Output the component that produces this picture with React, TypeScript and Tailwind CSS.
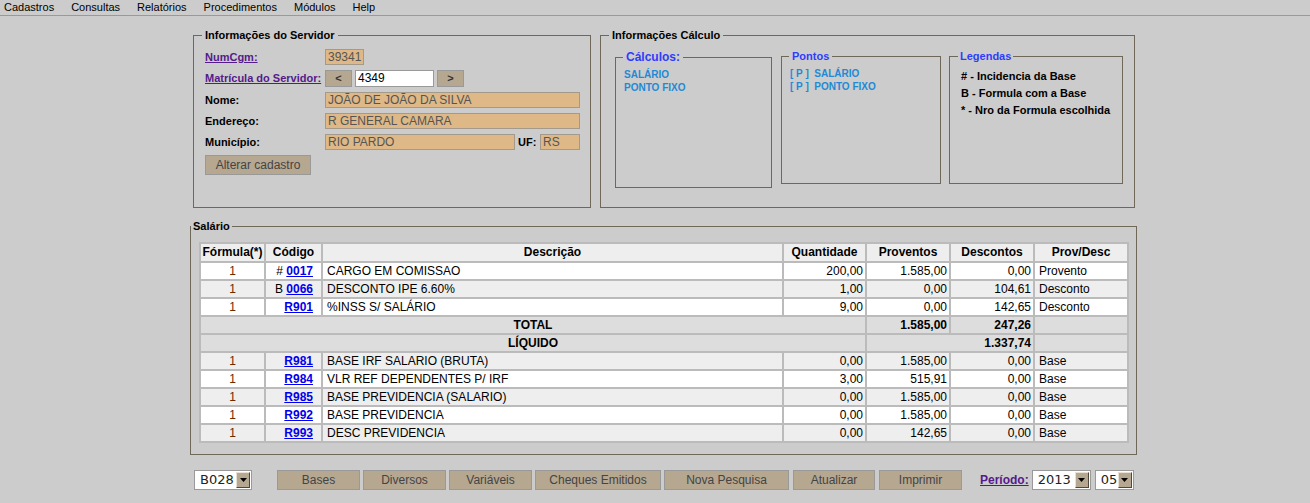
import React from "react";

type Row = {
  f: string;
  pre?: string;
  cod: string;
  desc: string;
  qtd: string;
  prov: string;
  desco: string;
  tipo: string;
  bg: string;
};

const topRows: Row[] = [
  { f: "1", pre: "# ", cod: "0017", desc: "CARGO EM COMISSAO", qtd: "200,00", prov: "1.585,00", desco: "0,00", tipo: "Provento", bg: "bg-white" },
  { f: "1", pre: "B ", cod: "0066", desc: "DESCONTO IPE 6.60%", qtd: "1,00", prov: "0,00", desco: "104,61", tipo: "Desconto", bg: "bg-[#eeeeee]" },
  { f: "1", cod: "R901", desc: "%INSS S/ SALÁRIO", qtd: "9,00", prov: "0,00", desco: "142,65", tipo: "Desconto", bg: "bg-white" },
];

const baseRows: Row[] = [
  { f: "1", cod: "R981", desc: "BASE IRF SALARIO (BRUTA)", qtd: "0,00", prov: "1.585,00", desco: "0,00", tipo: "Base", bg: "bg-[#eeeeee]" },
  { f: "1", cod: "R984", desc: "VLR REF DEPENDENTES P/ IRF", qtd: "3,00", prov: "515,91", desco: "0,00", tipo: "Base", bg: "bg-white" },
  { f: "1", cod: "R985", desc: "BASE PREVIDENCIA (SALARIO)", qtd: "0,00", prov: "1.585,00", desco: "0,00", tipo: "Base", bg: "bg-[#eeeeee]" },
  { f: "1", cod: "R992", desc: "BASE PREVIDENCIA", qtd: "0,00", prov: "1.585,00", desco: "0,00", tipo: "Base", bg: "bg-white" },
  { f: "1", cod: "R993", desc: "DESC PREVIDENCIA", qtd: "0,00", prov: "142,65", desco: "0,00", tipo: "Base", bg: "bg-[#eeeeee]" },
];

function Box({ className, children }: { className: string; children?: React.ReactNode }) {
  return (
    <div className={`h-[16px] bg-[#deb887] border border-[#a39a8c] text-[12px] leading-[14px] font-normal text-[#555] px-[2px] whitespace-nowrap ${className}`}>
      {children}
    </div>
  );
}

function Btn({ className, children }: { className: string; children: React.ReactNode }) {
  return (
    <div className={`h-[20px] bg-[#b6a791] border border-[#999] text-[12px] leading-[18px] font-normal text-[#444] text-center ${className}`}>
      {children}
    </div>
  );
}

function Sel({ value, className }: { value: string; className: string }) {
  return (
    <div className={`h-[20px] bg-white border border-[#999] flex ${className}`}>
      <span className="flex-1 pl-[5px] font-['DejaVu_Sans',sans-serif] text-[13px] leading-[18px] text-[#222]">{value}</span>
      <span className="w-[14px] my-[1px] mr-[1px] bg-[#b6a791] border border-[#e9e1d3] border-r-[#4f473a] border-b-[#4f473a] flex items-center justify-center">
        <svg width="7" height="4" viewBox="0 0 7 4">
          <path d="M0 0h7L3.5 4z" fill="#000" />
        </svg>
      </span>
    </div>
  );
}

function Line({ row }: { row: Row }) {
  const c = `h-[16px] p-0 leading-[16px] ${row.bg}`;
  return (
    <tr>
      <td className={`${c} text-center text-[#6a2a00]`}>{row.f}</td>
      <td className={`${c} text-right pr-[8px]`}>
        {row.pre}
        <a className="font-bold text-[#0000ee] underline">{row.cod}</a>
      </td>
      <td className={`${c} pl-[4px]`}>{row.desc}</td>
      <td className={`${c} text-right pr-[2px]`}>{row.qtd}</td>
      <td className={`${c} text-right pr-[2px]`}>{row.prov}</td>
      <td className={`${c} text-right pr-[2px]`}>{row.desco}</td>
      <td className={`${c} pl-[4px]`}>{row.tipo}</td>
    </tr>
  );
}

export default function App() {
  const head = "h-[17px] p-0 leading-[17px] bg-[#eeeeee] font-bold text-center";
  const sum = "h-[16px] p-0 leading-[16px] bg-[#dddddd] font-bold";

  return (
    <div className="w-[1310px] h-[503px] bg-[#cccccc] text-black font-['Liberation_Sans',Arial,sans-serif] overflow-hidden">
      {/* menu */}
      <div className="h-[16px] border-b border-[#999] flex gap-[17px] pl-[4px] text-[11px] leading-[15px]">
        <span>Cadastros</span>
        <span>Consultas</span>
        <span>Relatórios</span>
        <span>Procedimentos</span>
        <span>Módulos</span>
        <span>Help</span>
      </div>

      <div className="flex items-start mt-[13px] ml-[193px]">
        {/* Informações do Servidor */}
        <fieldset className="w-[398px] h-[179px] border border-[#6f6758]">
          <legend className="ml-[8px] px-[3px] text-[11px] leading-[13px] font-bold">Informações do Servidor</legend>
          <div className="pt-[7px] pl-[11px] flex flex-col gap-[5px] text-[11px] font-bold">
            <div className="flex items-center h-[16px]">
              <a className="w-[120px] text-[#551a8b] underline">NumCgm: </a>
              <Box className="w-[39px]">39341</Box>
            </div>
            <div className="flex items-center h-[17px]">
              <a className="w-[120px] text-[#551a8b] underline">Matrícula do Servidor:</a>
              <div className="w-[27px] h-[17px] bg-[#b6a791] border border-[#999] text-[11px] leading-[14px] text-center text-[#333]">&lt;</div>
              <div className="ml-[3px] w-[79px] h-[17px] bg-white border border-[#999] text-[12px] leading-[15px] font-normal px-[2px]">4349</div>
              <div className="ml-[3px] w-[27px] h-[17px] bg-[#b6a791] border border-[#999] text-[11px] leading-[14px] text-center text-[#333]">&gt;</div>
            </div>
            <div className="flex items-center h-[16px]">
              <span className="w-[120px]">Nome:</span>
              <Box className="w-[255px]">JOÃO DE JOÃO DA SILVA</Box>
            </div>
            <div className="flex items-center h-[16px]">
              <span className="w-[120px]">Endereço:</span>
              <Box className="w-[255px]">R GENERAL CAMARA</Box>
            </div>
            <div className="flex items-center h-[16px]">
              <span className="w-[120px]">Município:</span>
              <Box className="w-[190px]">RIO PARDO</Box>
              <span className="ml-[3px] w-[22px]">UF:</span>
              <Box className="w-[40px]">RS</Box>
            </div>
            <Btn className="w-[106px] h-[19px] leading-[17px]">Alterar cadastro</Btn>
          </div>
        </fieldset>

        {/* Informações Cálculo */}
        <fieldset className="ml-[9px] w-[535px] h-[179px] border border-[#6f6758]">
          <legend className="ml-[8px] px-[3px] text-[11px] leading-[13px] font-bold">Informações Cálculo</legend>
          <div className="flex items-start pt-[8px] pl-[14px]">
            <fieldset className="w-[157px] h-[138px] border border-[#6f6758]">
              <legend className="ml-[7px] px-[3px] text-[12px] leading-[14px] font-bold text-[#2e3cff]">Cálculos:</legend>
              <div className="pt-[4px] pl-[8px] text-[10px] leading-[13px] font-bold text-[#1e8ad6]">
                <div>SALÁRIO</div>
                <div>PONTO FIXO</div>
              </div>
            </fieldset>
            <fieldset className="ml-[9px] w-[160px] h-[134px] border border-[#6f6758]">
              <legend className="ml-[7px] px-[3px] text-[11px] leading-[13px] font-bold text-[#2e3cff]">Pontos</legend>
              <div className="pt-[4px] pl-[8px] text-[10px] leading-[13px] font-bold text-[#1e8ad6]">
                <div>[ P ]&nbsp; SALÁRIO</div>
                <div>[ P ]&nbsp; PONTO FIXO</div>
              </div>
            </fieldset>
            <fieldset className="ml-[8px] w-[174px] h-[134px] border border-[#6f6758]">
              <legend className="ml-[8px] px-[2px] text-[11px] leading-[13px] font-bold text-[#2e3cff]">Legendas</legend>
              <div className="pt-[5px] pl-[11px] text-[11px] leading-[17px] font-bold">
                <div># - Incidencia da Base</div>
                <div>B - Formula com a Base</div>
                <div>* - Nro da Formula escolhida</div>
              </div>
            </fieldset>
          </div>
        </fieldset>
      </div>

      {/* Salário */}
      <fieldset className="ml-[190px] mt-[12px] w-[947px] h-[235px] border border-[#6f6758]">
        <legend className="px-[2px] text-[11px] leading-[13px] font-bold">Salário</legend>
        <div className="pt-[9px] pl-[8px]">
          <table className="table-fixed w-[930px] border-separate border-spacing-[2px] bg-[#bbbbbb] text-[12px]">
            <colgroup>
              <col className="w-[63px]" />
              <col className="w-[55px]" />
              <col className="w-[459px]" />
              <col className="w-[81px]" />
              <col className="w-[82px]" />
              <col className="w-[82px]" />
              <col className="w-[92px]" />
            </colgroup>
            <tbody>
              <tr>
                <td className={head}>Fórmula(*)</td>
                <td className={head}>Código</td>
                <td className={head}>Descrição</td>
                <td className={head}>Quantidade</td>
                <td className={head}>Proventos</td>
                <td className={head}>Descontos</td>
                <td className={head}>Prov/Desc</td>
              </tr>
              {topRows.map((r) => (
                <Line key={r.cod} row={r} />
              ))}
              <tr>
                <td colSpan={4} className={`${sum} text-center`}>TOTAL</td>
                <td className={`${sum} text-right pr-[2px]`}>1.585,00</td>
                <td className={`${sum} text-right pr-[2px]`}>247,26</td>
                <td className={sum}></td>
              </tr>
              <tr>
                <td colSpan={4} className={`${sum} text-center`}>LÍQUIDO</td>
                <td colSpan={2} className={`${sum} text-right pr-[2px]`}>1.337,74</td>
                <td className={sum}></td>
              </tr>
              {baseRows.map((r) => (
                <Line key={r.cod} row={r} />
              ))}
            </tbody>
          </table>
        </div>
      </fieldset>

      {/* barra inferior */}
      <div className="flex items-center mt-[15px] ml-[194px] h-[20px]">
        <Sel value="B028" className="w-[58px]" />
        <Btn className="ml-[25px] w-[83px]">Bases</Btn>
        <Btn className="ml-[3px] w-[83px]">Diversos</Btn>
        <Btn className="ml-[3px] w-[83px]">Variáveis</Btn>
        <Btn className="ml-[3px] w-[126px]">Cheques Emitidos</Btn>
        <Btn className="ml-[3px] w-[125px]">Nova Pesquisa</Btn>
        <Btn className="ml-[4px] w-[82px]">Atualizar</Btn>
        <Btn className="ml-[4px] w-[83px]">Imprimir</Btn>
        <a className="ml-[18px] text-[12px] font-bold text-[#551a8b] underline">Período:</a>
        <Sel value="2013" className="ml-[3px] w-[59px]" />
        <Sel value="05" className="ml-[4px] w-[39px]" />
      </div>
    </div>
  );
}
